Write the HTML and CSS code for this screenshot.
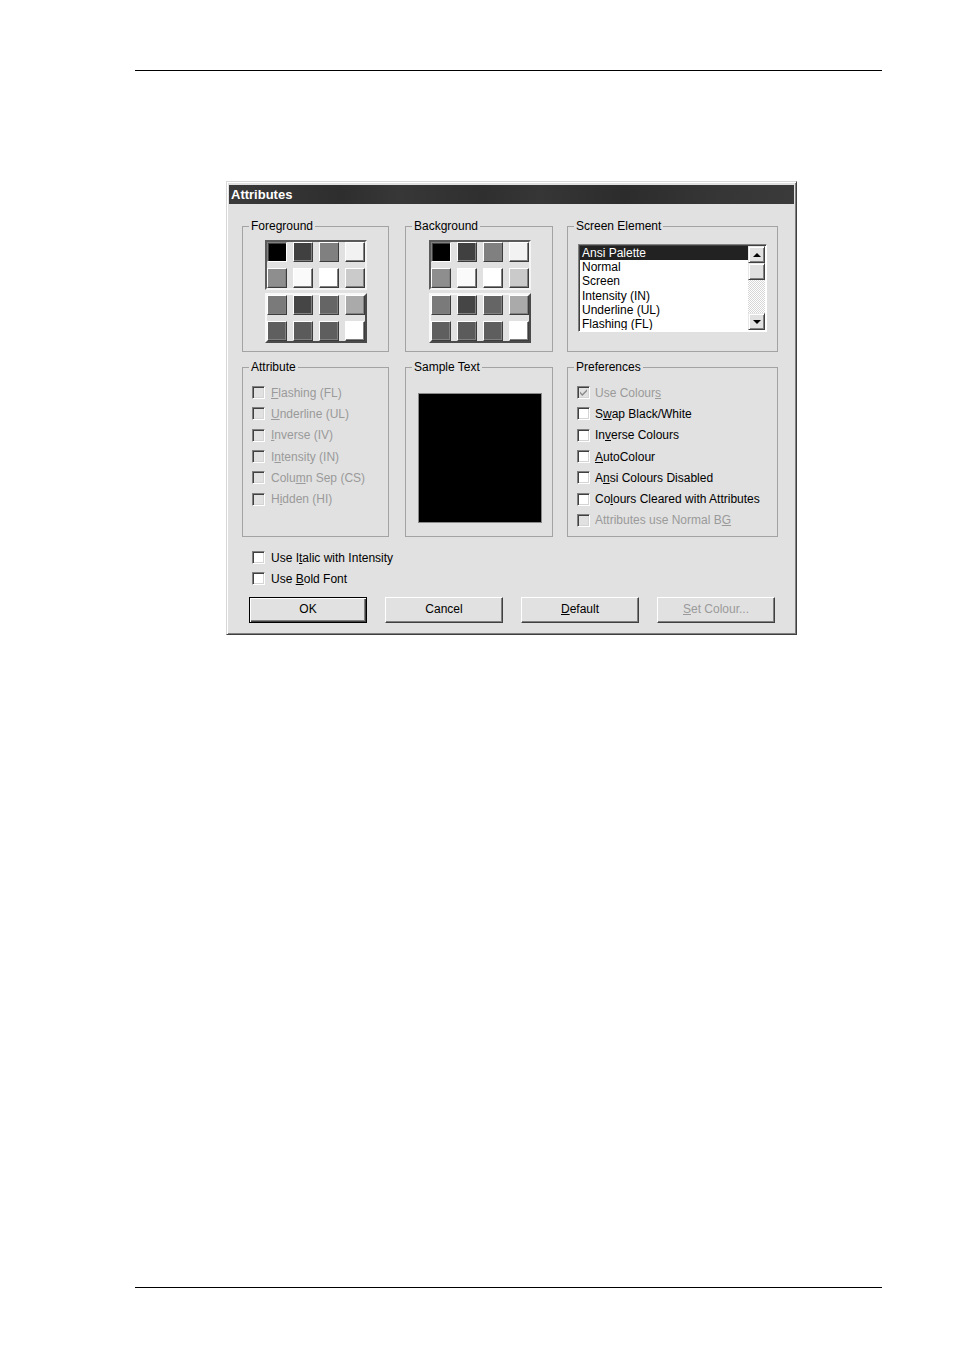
FILE: index.html
```html
<!DOCTYPE html>
<html>
<head>
<meta charset="utf-8">
<link rel="stylesheet" href="styles.css">
</head>
<body>
<div class="page">
  <div class="rule"></div>
  <div class="dialog">
    <div class="titlebar">Attributes</div>
    <div class="body">
      <div class="row row-top">
        <div class="group g-fg">
          <span class="glabel">Foreground</span>
          <div class="palette">
            <div class="block sunken">
              <div class="cell sel" style="background:#000"></div>
              <div class="cell" style="background:#404040"></div>
              <div class="cell" style="background:#808080"></div>
              <div class="cell" style="background:#f2f2f2"></div>
              <div class="cell" style="background:#8e8e8e"></div>
              <div class="cell" style="background:#fafafa"></div>
              <div class="cell" style="background:#ffffff"></div>
              <div class="cell" style="background:#cacaca"></div>
            </div>
            <div class="block raised">
              <div class="cell" style="background:#7a7a7a"></div>
              <div class="cell" style="background:#454545"></div>
              <div class="cell" style="background:#656565"></div>
              <div class="cell" style="background:#aaaaaa"></div>
              <div class="cell" style="background:#5f5f5f"></div>
              <div class="cell" style="background:#5b5b5b"></div>
              <div class="cell" style="background:#5e5e5e"></div>
              <div class="cell" style="background:#ffffff"></div>
            </div>
          </div>
        </div>
        <div class="group g-bg">
          <span class="glabel">Background</span>
          <div class="palette">
            <div class="block sunken">
              <div class="cell sel" style="background:#000"></div>
              <div class="cell" style="background:#404040"></div>
              <div class="cell" style="background:#808080"></div>
              <div class="cell" style="background:#f2f2f2"></div>
              <div class="cell" style="background:#8e8e8e"></div>
              <div class="cell" style="background:#fafafa"></div>
              <div class="cell" style="background:#ffffff"></div>
              <div class="cell" style="background:#cacaca"></div>
            </div>
            <div class="block raised">
              <div class="cell" style="background:#7a7a7a"></div>
              <div class="cell" style="background:#454545"></div>
              <div class="cell" style="background:#656565"></div>
              <div class="cell" style="background:#aaaaaa"></div>
              <div class="cell" style="background:#5f5f5f"></div>
              <div class="cell" style="background:#5b5b5b"></div>
              <div class="cell" style="background:#5e5e5e"></div>
              <div class="cell" style="background:#ffffff"></div>
            </div>
          </div>
        </div>
        <div class="group g-se">
          <span class="glabel">Screen Element</span>
          <div class="listbox">
            <div class="items">
              <div class="item selected">Ansi Palette</div>
              <div class="item">Normal</div>
              <div class="item">Screen</div>
              <div class="item">Intensity (IN)</div>
              <div class="item">Underline (UL)</div>
              <div class="item">Flashing (FL)</div>
            </div>
            <div class="scrollbar">
              <div class="sbtn"><span class="arrow up"></span></div>
              <div class="sbtn thumb"></div>
              <div class="track"></div>
              <div class="sbtn"><span class="arrow down"></span></div>
            </div>
          </div>
        </div>
      </div>
      <div class="row row-mid">
        <div class="group g-attr">
          <span class="glabel">Attribute</span>
          <div class="checks">
            <div class="check disabled"><span class="box"></span><span class="ctext"><u>F</u>lashing (FL)</span></div>
            <div class="check disabled"><span class="box"></span><span class="ctext"><u>U</u>nderline (UL)</span></div>
            <div class="check disabled"><span class="box"></span><span class="ctext"><u>I</u>nverse (IV)</span></div>
            <div class="check disabled"><span class="box"></span><span class="ctext">I<u>n</u>tensity (IN)</span></div>
            <div class="check disabled"><span class="box"></span><span class="ctext">Colu<u>m</u>n Sep (CS)</span></div>
            <div class="check disabled"><span class="box"></span><span class="ctext">H<u>i</u>dden (HI)</span></div>
          </div>
        </div>
        <div class="group g-sample">
          <span class="glabel">Sample Text</span>
          <div class="sample"></div>
        </div>
        <div class="group g-pref">
          <span class="glabel">Preferences</span>
          <div class="checks">
            <div class="check disabled"><span class="box"><svg width="11" height="11" viewBox="0 0 11 11"><path d="M2 4.5 L4.3 7 L9 2.2 L9 4.2 L4.3 9 L2 6.5 Z" fill="#8a8a8a"/></svg></span><span class="ctext">Use Colour<u>s</u></span></div>
            <div class="check"><span class="box"></span><span class="ctext">S<u>w</u>ap Black/White</span></div>
            <div class="check"><span class="box"></span><span class="ctext">In<u>v</u>erse Colours</span></div>
            <div class="check"><span class="box"></span><span class="ctext"><u>A</u>utoColour</span></div>
            <div class="check"><span class="box"></span><span class="ctext">A<u>n</u>si Colours Disabled</span></div>
            <div class="check"><span class="box"></span><span class="ctext">Co<u>l</u>ours Cleared with Attributes</span></div>
            <div class="check disabled"><span class="box"></span><span class="ctext">Attributes use Normal B<u>G</u></span></div>
          </div>
        </div>
      </div>
      <div class="bottom-checks">
        <div class="check"><span class="box"></span><span class="ctext">Use I<u>t</u>alic with Intensity</span></div>
        <div class="check"><span class="box"></span><span class="ctext">Use <u>B</u>old Font</span></div>
      </div>
      <div class="buttons">
        <div class="btn default">OK</div>
        <div class="btn">Cancel</div>
        <div class="btn"><u>D</u>efault</div>
        <div class="btn disabled"><u>S</u>et Colour...</div>
      </div>
    </div>
  </div>
  <div class="rule bottom"></div>
</div>
</body>
</html>
```

FILE: styles.css
```css
html, body {
  margin: 0;
  padding: 0;
  background: #ffffff;
}

.page {
  width: 954px;
  height: 1351px;
  padding-top: 70px;
  box-sizing: border-box;
  font-family: "Liberation Sans", Arial, sans-serif;
  font-size: 12px;
  color: #000;
}

.rule {
  margin-left: 135px;
  width: 747px;
  height: 1px;
  background: #000;
}

.rule.bottom {
  margin-top: 652px;
}

.dialog {
  margin: 110px 0 0 226px;
  width: 571px;
  height: 454px;
  box-sizing: border-box;
  background: #e1e1e1;
  border: 1px solid;
  border-color: #d8d8d8 #404040 #404040 #d8d8d8;
  box-shadow: inset 1px 1px #ffffff, inset -1px -1px #808080;
  padding: 3px 2px 2px 2px;
}

.titlebar {
  height: 19px;
  line-height: 19px;
  padding-left: 2px;
  color: #fff;
  font-weight: bold;
  font-size: 13px;
  background: linear-gradient(90deg, #3a3a3a 0, #343434 10%, #2e2e2e 20%, #373737 30%, #2f2f2f 45%, #363636 55%, #2c2c2c 70%, #353535 85%, #3a3a3a 100%);
}

.body {
  padding: 22px 0 0 13px;
}

.row {
  display: flex;
}

.row-top .group {
  height: 126px;
}

.row-mid {
  margin-top: 15px;
}

.row-mid .group {
  height: 170px;
}

.group {
  position: relative;
  box-sizing: border-box;
  border: 1px solid #a3a3a3;
}

.g-fg, .g-attr { width: 147px; }
.g-bg, .g-sample { width: 148px; margin-left: 16px; }
.g-se, .g-pref { width: 211px; margin-left: 14px; }

.glabel {
  position: absolute;
  top: -8px;
  left: 6px;
  padding: 0 2px;
  line-height: 14px;
  background: #e1e1e1;
  white-space: nowrap;
}

/* palette */
.palette {
  margin-top: 13px;
  width: 102px;
}

.g-fg .palette { margin-left: 22px; }
.g-bg .palette { margin-left: 23px; }

.block {
  display: grid;
  grid-template-columns: repeat(4, 20px);
  grid-auto-rows: 20px;
  gap: 6px;
  border: 2px solid;
}

.block.sunken {
  border-color: #5a5a5a #f4f4f4 #f4f4f4 #5a5a5a;
}

.block.raised {
  margin-top: 3px;
  border-color: #f8f8f8 #4a4a4a #4a4a4a #f8f8f8;
}

.cell {
  box-sizing: border-box;
  border: 1px solid;
  border-color: #ffffff #3c3c3c #3c3c3c #ffffff;
  box-shadow: inset -1px -1px #808080;
}

.cell.sel {
  border-color: #808080 #ffffff #ffffff #808080;
  box-shadow: inset 1px 1px #404040;
}

/* listbox */
.listbox {
  margin: 17px 0 0 10px;
  width: 189px;
  height: 88px;
  box-sizing: border-box;
  border: 1px solid;
  border-color: #808080 #ffffff #ffffff #808080;
  box-shadow: inset 1px 1px #404040;
  background: #fff;
  padding: 1px;
  display: flex;
}

.items {
  flex: 1;
  overflow: hidden;
}

.item {
  height: 14.2px;
  line-height: 14px;
  padding-left: 2px;
  white-space: nowrap;
}

.item.selected {
  background: #222;
  color: #fff;
}

.scrollbar {
  width: 17px;
  display: flex;
  flex-direction: column;
}

.sbtn {
  height: 17px;
  box-sizing: border-box;
  background: #e1e1e1;
  border: 1px solid;
  border-color: #e8e8e8 #404040 #404040 #e8e8e8;
  box-shadow: inset 1px 1px #ffffff, inset -1px -1px #808080;
  display: flex;
  align-items: center;
  justify-content: center;
}

.track {
  flex: 1;
  background: repeating-conic-gradient(#ffffff 0 25%, #d6d6d6 0 50%) 0 0 / 2px 2px;
}

.arrow {
  width: 0;
  height: 0;
  border-left: 4px solid transparent;
  border-right: 4px solid transparent;
}

.arrow.up { border-bottom: 4px solid #000; }
.arrow.down { border-top: 4px solid #000; }

/* checks */
.checks {
  padding: 14px 0 0 9px;
}

.check {
  display: flex;
  align-items: center;
  height: 21.3px;
  white-space: nowrap;
}

.box {
  width: 13px;
  height: 13px;
  box-sizing: border-box;
  border: 1px solid;
  border-color: #808080 #ffffff #ffffff #808080;
  box-shadow: inset 1px 1px #404040, inset -1px -1px #d4d4d4;
  background: #fff;
  display: flex;
  align-items: center;
  justify-content: center;
  flex: none;
}

.check.disabled .box {
  background: #e1e1e1;
}

.ctext {
  margin-left: 6px;
  line-height: 14px;
}

.g-pref .ctext {
  margin-left: 5px;
}

.check.disabled .ctext {
  color: #9a9a9a;
}

.sample {
  margin: 25px 0 0 12px;
  width: 124px;
  height: 130px;
  box-sizing: border-box;
  background: #000;
  border: 1px solid #8a8a8a;
}

.bottom-checks {
  margin: 10px 0 0 10px;
}

.buttons {
  display: flex;
  margin: 7px 0 0 7px;
}

.btn {
  width: 118px;
  height: 26px;
  box-sizing: border-box;
  margin-right: 18px;
  background: #e1e1e1;
  border: 1px solid;
  border-color: #ffffff #404040 #404040 #ffffff;
  box-shadow: inset -1px -1px #808080;
  display: flex;
  align-items: center;
  justify-content: center;
  padding-bottom: 1px;
}

.btn.default {
  border: 1px solid #000;
  box-shadow: inset 1px 1px #ffffff, inset -1px -1px #404040, inset -2px -2px #808080;
}

.btn.disabled {
  color: #9a9a9a;
}
```
